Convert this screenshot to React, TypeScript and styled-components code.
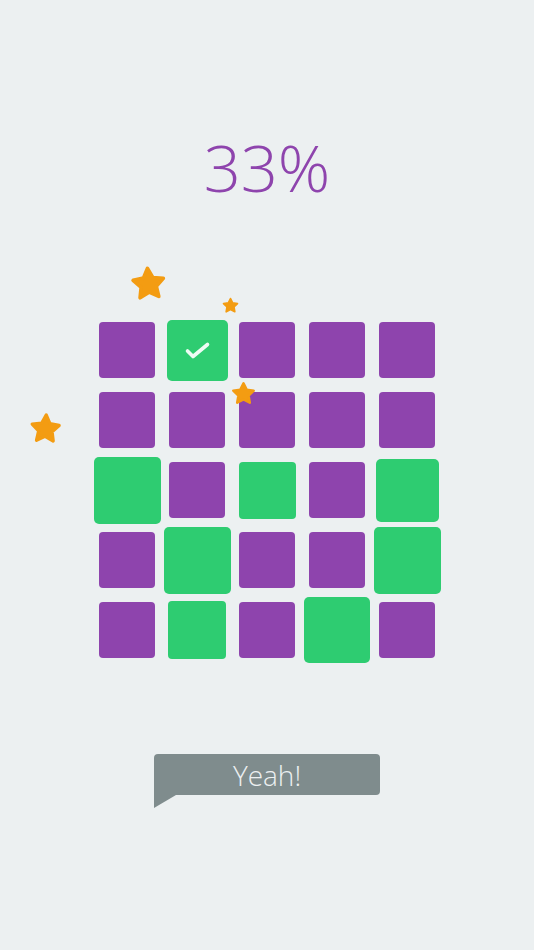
import React from 'react'
import styled, { createGlobalStyle } from 'styled-components'

const GlobalStyle = createGlobalStyle`
  html, body {
    margin: 0;
    padding: 0;
    background: #ecf0f1;
  }
  body {
    font-family: "Open Sans", "Liberation Sans", sans-serif;
  }
`

const PURPLE = '#8e44ad'
const GREEN = '#2ecc71'
const STAR = '#f39c12'

const Page = styled.div`
  position: relative;
  width: 534px;
  height: 950px;
  display: flex;
  flex-direction: column;
  align-items: center;
  overflow: hidden;
`

const Score = styled.div`
  margin-top: 135px;
  font-size: 65px;
  font-weight: 300;
  line-height: 1;
  color: ${PURPLE};
`

const Board = styled.div`
  margin-top: 115px;
  display: grid;
  grid-template-columns: repeat(5, 70px);
  grid-auto-rows: 70px;
`

const Slot = styled.div`
  display: flex;
  align-items: center;
  justify-content: center;
`

const Tile = styled.div<{ $size: number; $on: boolean }>`
  width: ${(p) => p.$size}px;
  height: ${(p) => p.$size}px;
  border-radius: ${(p) => (p.$size > 60 ? 5 : 4)}px;
  background: ${(p) => (p.$on ? GREEN : PURPLE)};
  display: flex;
  align-items: center;
  justify-content: center;
`

const Bubble = styled.div`
  position: relative;
  margin-top: 89px;
  width: 226px;
  height: 41px;
  border-radius: 4px 4px 4px 0;
  background: #7f8c8d;
  display: flex;
  align-items: center;
  justify-content: center;
  font-size: 28px;
  font-weight: 300;
  line-height: 1;
  color: #ecf0f1;

  &::after {
    content: '';
    position: absolute;
    left: 0;
    top: 41px;
    width: 0;
    height: 0;
    border-top: 13px solid #7f8c8d;
    border-right: 22px solid transparent;
  }
`

const StarMark = styled.svg<{ $x: number; $y: number; $rot: number }>`
  position: absolute;
  left: ${(p) => p.$x}px;
  top: ${(p) => p.$y}px;
  transform: rotate(${(p) => p.$rot}deg);
  z-index: 2;
`

// [size, green]
const rows: [number, boolean][][] = [
  [[56, false], [61, true], [56, false], [56, false], [56, false]],
  [[56, false], [56, false], [56, false], [56, false], [56, false]],
  [[67, true], [56, false], [57, true], [56, false], [63, true]],
  [[56, false], [67, true], [56, false], [56, false], [67, true]],
  [[56, false], [58, true], [56, false], [66, true], [56, false]],
]

const stars = [
  { x: 130, y: 265, size: 37, rot: -4 },
  { x: 222, y: 297, size: 17, rot: 0 },
  { x: 29, y: 412, size: 33, rot: 3 },
  { x: 231, y: 381, size: 25, rot: 0 },
]

const Star = ({ x, y, size, rot }: { x: number; y: number; size: number; rot: number }) => (
  <StarMark $x={x} $y={y} $rot={rot} width={size} height={size} viewBox="0 0 100 100">
    <polygon
      points="50,9 62.64,34.61 90.9,38.71 70.45,58.64 75.27,86.79 50,73.5 24.73,86.79 29.55,58.64 9.1,38.71 37.36,34.61"
      fill={STAR}
      stroke={STAR}
      strokeWidth={10}
      strokeLinejoin="round"
    />
  </StarMark>
)

const Check = () => (
  <svg width="61" height="61" viewBox="0 0 61 61">
    <polyline
      points="20.5,31 26,36.5 40.5,24.5"
      fill="none"
      stroke="rgba(255,255,255,0.92)"
      strokeWidth={3.6}
      strokeLinecap="round"
      strokeLinejoin="round"
    />
  </svg>
)

export default function App() {
  return (
    <>
      <GlobalStyle />
      <Page>
        <Score>33%</Score>
        <Board>
          {rows.map((row, r) =>
            row.map(([size, on], c) => (
              <Slot key={`${r}-${c}`}>
                <Tile $size={size} $on={on}>
                  {r === 0 && c === 1 && <Check />}
                </Tile>
              </Slot>
            ))
          )}
        </Board>
        <Bubble>Yeah!</Bubble>
        {stars.map((s, i) => (
          <Star key={i} {...s} />
        ))}
      </Page>
    </>
  )
}
